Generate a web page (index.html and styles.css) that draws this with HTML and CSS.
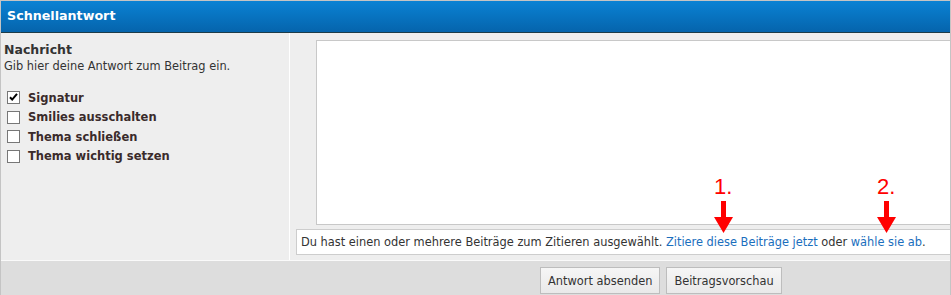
FILE: index.html
```html
<!DOCTYPE html>
<html lang="de">
<head>
<meta charset="utf-8">
<title>Schnellantwort</title>
<link rel="stylesheet" href="styles.css">
</head>
<body>
<div class="panel">
  <div class="header">Schnellantwort</div>
  <div class="body">
    <div class="side">
      <div class="title">Nachricht</div>
      <div class="desc">Gib hier deine Antwort zum Beitrag ein.</div>
      <ul class="opts">
        <li><span class="cb"><svg viewBox="0 0 13 13" width="13" height="13"><path d="M3 6.2 L5.2 8.6 L10 2.8" fill="none" stroke="#000" stroke-width="2"/></svg></span>Signatur</li>
        <li><span class="cb"></span>Smilies ausschalten</li>
        <li><span class="cb"></span>Thema schließen</li>
        <li><span class="cb"></span>Thema wichtig setzen</li>
      </ul>
    </div>
    <div class="main">
      <textarea class="editor"></textarea>
      <div class="notice">Du hast einen oder mehrere Beiträge zum Zitieren ausgewählt. <a href="#">Zitiere diese Beiträge jetzt</a> oder <a href="#">wähle sie ab</a>.</div>
    </div>
  </div>
  <div class="actions">
    <button class="btn">Antwort absenden</button>
    <button class="btn">Beitragsvorschau</button>
  </div>
  <div class="mark mark-1"><span class="num">1.</span><svg viewBox="0 0 19 32" width="19" height="32"><rect x="7" y="0" width="5" height="17" fill="#f00"/><polygon points="0,16 19,16 9.5,32" fill="#f00"/></svg></div>
  <div class="mark mark-2"><span class="num">2.</span><svg viewBox="0 0 19 32" width="19" height="32"><rect x="7" y="0" width="5" height="17" fill="#f00"/><polygon points="0,16 19,16 9.5,32" fill="#f00"/></svg></div>
</div>
</body>
</html>
```
FILE: styles.css
```css
* { box-sizing: border-box; }
html, body { margin: 0; padding: 0; background: #fff; }
body { font-family: "DejaVu Sans", Verdana, sans-serif; color: #333; }

.panel {
  position: relative;
  width: 951px;
  height: 295px;
  border-left: 1px solid #c4c4c4;
  border-right: 1px solid #c4c4c4;
  border-top: 1px solid #c4c4c4;
  overflow: hidden;
}

.header {
  height: 32px;
  background: linear-gradient(#0a82d4, #0564ac);
  border-bottom: 1px solid #1d3c48;
  color: #fff;
  font-weight: bold;
  font-size: 12.7px;
  line-height: 30px;
  padding-left: 6px;
}

.body {
  display: flex;
  height: 227px;
  background: #eee;
}

.side {
  flex: none;
  width: 289px;
  border-right: 1px solid #fff;
  padding: 8px 0 0 3px;
}
.title { font-weight: bold; font-size: 12.5px; line-height: 18px; }
.desc { font-size: 11.4px; line-height: 15px; }

.opts { list-style: none; margin: 14px 0 0 0; padding: 0 0 0 3px; }
.opts li {
  display: flex;
  align-items: center;
  height: 19.5px;
  font-size: 11.5px;
  font-weight: bold;
  color: #3a2b2b;
}
.cb {
  flex: none;
  width: 13px; height: 13px;
  border: 1px solid #777;
  background: #fff;
  margin-right: 8px;
  display: flex; align-items: center; justify-content: center;
}
.cb svg { display: block; flex: none; }

.main {
  flex: 1;
  min-width: 0;
  padding-top: 7px;
  display: flex;
  flex-direction: column;
}
.editor {
  display: block;
  margin: 0 0 0 26px;
  width: 634px;
  height: 185px;
  border: 1px solid #c8c8c8;
  border-right: none;
  background: #fff;
  resize: none;
  outline: none;
}
.notice {
  margin: 4px 0 0 6px;
  height: 26px;
  border: 1px solid #cdcdcd;
  border-right: none;
  background: #fff;
  font-size: 11.4px;
  line-height: 24px;
  padding-left: 4px;
  white-space: nowrap;
  overflow: hidden;
}
.notice a { color: #1a6ebd; text-decoration: none; }

.actions {
  border-top: 1px solid #fafafa;
  background: #ddd;
  height: 35px;
  padding: 6px 0 0 539px;
  display: flex;
  gap: 6px;
  align-items: flex-start;
}
.btn {
  height: 27px;
  font-family: "DejaVu Sans", Verdana, sans-serif;
  font-size: 11.4px;
  color: #333;
  background: linear-gradient(#f6f6f6, #e9e9e9);
  border: 1px solid #bdbdbd;
  padding: 0 7px;
  margin: 0;
}

.mark {
  position: absolute;
  width: 19px;
  display: flex;
  flex-direction: column;
  align-items: flex-start;
}
.mark .num {
  font-family: "Liberation Sans", Arial, sans-serif;
  font-size: 22px;
  line-height: 22px;
  color: #f00;
  height: 25px;
  white-space: nowrap;
}
.mark svg { display: block; }
.mark-1 { left: 713px; top: 175px; }
.mark-2 { left: 876px; top: 175px; }
```
